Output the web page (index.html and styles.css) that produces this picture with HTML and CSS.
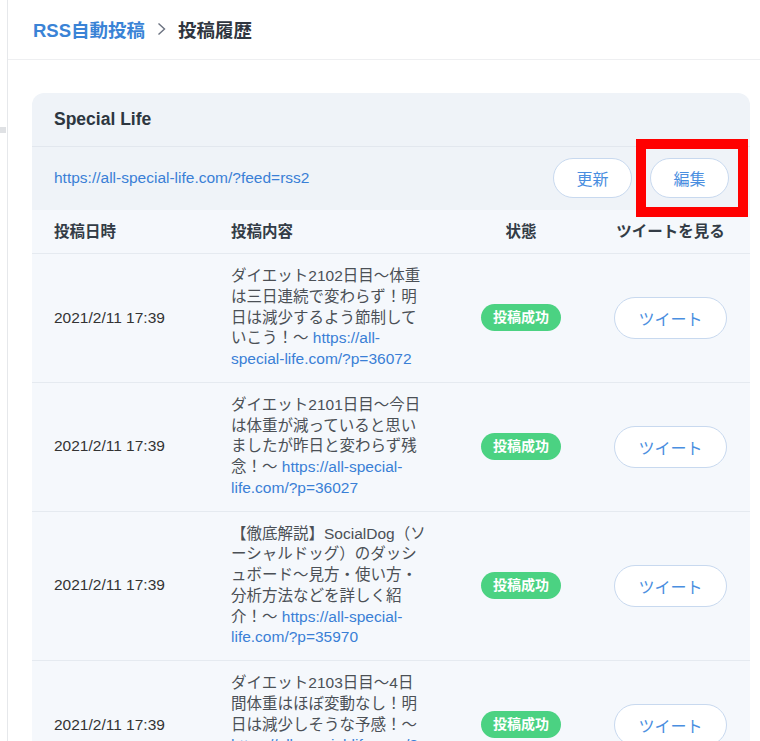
FILE: index.html
```html
<!DOCTYPE html>
<html lang="ja">
<head>
  <meta charset="UTF-8" />
  <title>投稿履歴 - RSS自動投稿</title>
  <link rel="stylesheet" href="styles.css">
</head>
<body>
<div class="layout">
  <aside class="sidebar"><span class="sidebar-mark"></span></aside>

  <div class="page">
    <header class="topbar">
      <nav class="crumbs">
        <a href="#" class="crumb-link">RSS自動投稿</a>
        <svg class="crumb-sep" width="9" height="14" viewBox="0 0 9 14"><path d="M1.5 1.5l6 5.5-6 5.5" fill="none" stroke="#6b7280" stroke-width="1.4"/></svg>
        <span class="crumb-current">投稿履歴</span>
      </nav>
    </header>

    <main class="main">
      <section class="card">
        <h2 class="card-title">Special Life</h2>

        <div class="feed-row">
          <a href="#" class="feed-url">https://all-special-life.com/?feed=rss2</a>
          <div class="feed-actions">
            <button class="pill-btn">更新</button>
            <span class="edit-wrap">
              <button class="pill-btn">編集</button>
              <span class="highlight"></span>
            </span>
          </div>
        </div>

        <div class="history">
          <div class="history-row history-head">
            <div>投稿日時</div>
            <div>投稿内容</div>
            <div class="col-center">状態</div>
            <div class="col-center">ツイートを見る</div>
          </div>

          <div class="history-row">
            <div class="post-date">2021/2/11 17:39</div>
            <div class="post-text">ダイエット2102日目〜体重は三日連続で変わらず！明日は減少するよう節制していこう！〜 <a href="#">https://all-special-life.com/?p=36072</a></div>
            <div class="col-center"><span class="badge">投稿成功</span></div>
            <div class="col-center"><button class="pill-btn tweet-btn">ツイート</button></div>
          </div>

          <div class="history-row">
            <div class="post-date">2021/2/11 17:39</div>
            <div class="post-text">ダイエット2101日目〜今日は体重が減っていると思いましたが昨日と変わらず残念！〜 <a href="#">https://all-special-life.com/?p=36027</a></div>
            <div class="col-center"><span class="badge">投稿成功</span></div>
            <div class="col-center"><button class="pill-btn tweet-btn">ツイート</button></div>
          </div>

          <div class="history-row">
            <div class="post-date">2021/2/11 17:39</div>
            <div class="post-text">【徹底解説】SocialDog（ソーシャルドッグ）のダッシュボード〜見方・使い方・分析方法などを詳しく紹介！〜 <a href="#">https://all-special-life.com/?p=35970</a></div>
            <div class="col-center"><span class="badge">投稿成功</span></div>
            <div class="col-center"><button class="pill-btn tweet-btn">ツイート</button></div>
          </div>

          <div class="history-row">
            <div class="post-date">2021/2/11 17:39</div>
            <div class="post-text">ダイエット2103日目〜4日間体重はほぼ変動なし！明日は減少しそうな予感！〜 <a href="#">https://all-special-life.com/?p=36115</a></div>
            <div class="col-center"><span class="badge">投稿成功</span></div>
            <div class="col-center"><button class="pill-btn tweet-btn">ツイート</button></div>
          </div>
        </div>
      </section>
    </main>
  </div>
</div>
</body>
</html>
```

FILE: styles.css
```css
body {
  margin: 0;
  font-family: "Liberation Sans", "Noto Sans CJK JP", sans-serif;
  background: #fff;
  color: #333;
}

.layout {
  display: flex;
  min-height: 100vh;
}

.sidebar {
  width: 7px;
  flex-shrink: 0;
  border-right: 1px solid #e6e8eb;
}

.sidebar-mark {
  display: block;
  width: 6px;
  height: 6px;
  margin-top: 127px;
  background: #dfe1e4;
}

.page {
  flex: 1;
  min-width: 0;
}

/* ヘッダー */
.topbar {
  height: 60px;
  box-sizing: border-box;
  border-bottom: 1px solid #eeeff1;
  display: flex;
  align-items: center;
  padding: 0 0 2px 25px;
}

.crumbs {
  display: flex;
  align-items: center;
  gap: 12px;
  font-size: 18.5px;
  font-weight: bold;
}

.crumb-link {
  color: #3a83d6;
  text-decoration: none;
}

.crumb-current {
  color: #2f3640;
}

.main {
  padding: 33px 10px 0 24px;
}

/* カード */
.card {
  background: #eff3f8;
  border-radius: 12px;
  overflow: hidden;
}

.card-title {
  margin: 0;
  padding: 15px 22px 16px;
  font-size: 17.5px;
  line-height: 22px;
  color: #2d3640;
  border-bottom: 1px solid #e2e7ee;
}

.feed-row {
  display: flex;
  align-items: center;
  justify-content: space-between;
  padding: 11px 21px 12px 22px;
}

.feed-url {
  color: #3a7fd6;
  font-size: 15.5px;
  text-decoration: none;
}

.feed-actions {
  display: flex;
  gap: 18px;
}

.edit-wrap {
  position: relative;
  display: inline-block;
}

.highlight {
  position: absolute;
  left: -14px;
  top: -19px;
  width: 112px;
  height: 78px;
  box-sizing: border-box;
  border: 10px solid #ff0000;
  pointer-events: none;
}

.pill-btn {
  width: 79px;
  height: 40px;
  background: #fff;
  border: 1px solid #c8d9ef;
  border-radius: 20px;
  color: #4a8ee0;
  font-family: inherit;
  font-size: 16px;
  cursor: pointer;
}

.tweet-btn {
  width: 113px;
  height: 42px;
  border-radius: 21px;
}

/* 履歴テーブル */
.history {
  background: #f5f8fc;
}

.history-row {
  display: grid;
  grid-template-columns: 177px 205px 170px 1fr;
  align-items: center;
  padding: 12px 15px 12px 22px;
  border-top: 1px solid #e5eaf0;
  font-size: 15.5px;
  line-height: 20.75px;
}

.history-head {
  border-top: none;
  padding-top: 11px;
  padding-bottom: 11px;
  line-height: 21px;
  font-weight: bold;
  color: #333c46;
}

.col-center {
  text-align: center;
}

.post-date {
  color: #333;
}

.post-text {
  padding-right: 9px;
  color: #4b5056;
}

.post-text a {
  color: #3a7fd6;
  text-decoration: none;
}

.badge {
  display: inline-block;
  width: 80px;
  height: 27px;
  line-height: 27px;
  border-radius: 14px;
  background: #4bd282;
  color: #fff;
  font-size: 14px;
  font-weight: bold;
}
```
